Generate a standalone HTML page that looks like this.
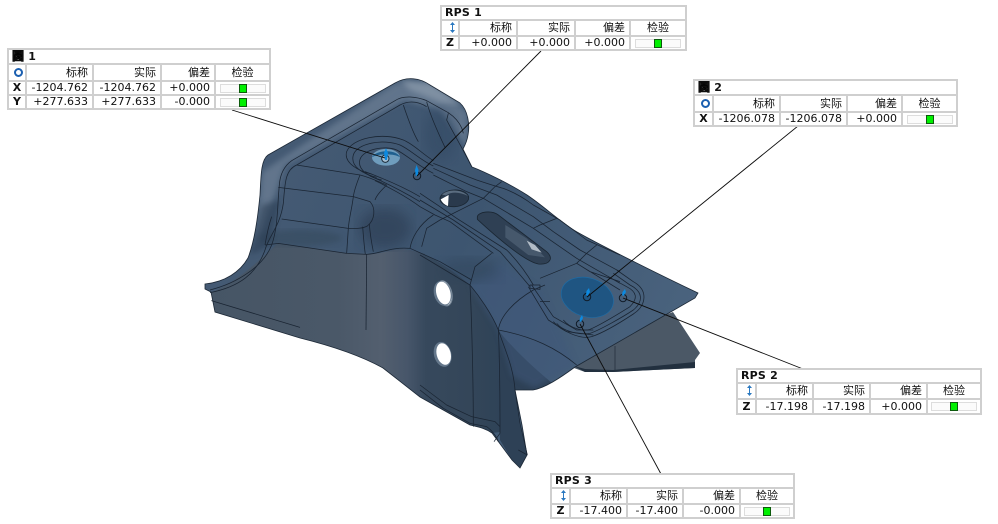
<!DOCTYPE html>
<html lang="zh">
<head>
<meta charset="utf-8">
<title>RPS</title>
<style>
html,body{margin:0;padding:0;background:#fff;width:998px;height:524px;overflow:hidden}
svg.p{position:absolute;left:0;top:0}
table{position:absolute;border-collapse:collapse;table-layout:fixed;background:#fff;font:11px "DejaVu Sans","Noto Sans CJK SC",sans-serif;color:#111}
td{border:2px solid #cfcfcf;padding:0 4px 0 0;text-align:right;white-space:nowrap;overflow:hidden;line-height:12px}
td.t{text-align:left;font-weight:bold;padding-left:3px;letter-spacing:.2px}
td.t b{font-family:"WenQuanYi Zen Hei","Noto Sans CJK SC",sans-serif;-webkit-text-stroke:.6px #000;font-size:12px;margin-right:4px}
td.h{font-family:"WenQuanYi Zen Hei","Noto Sans CJK SC",sans-serif;letter-spacing:0;padding-right:4px;padding-bottom:2px}
td.c{text-align:right;padding:0 2px 0 0}
td.hc{text-align:center;padding:0 0 2px 0}
td.a{text-align:center;font-weight:bold;padding:0}
td.g{padding:0;text-align:center}
.ga{display:block;position:relative;width:44px;height:7px;margin:0 auto;border:1px solid #ddd;background:#fbfbfb}
.ga i{position:absolute;left:18px;top:-1px;width:6px;height:7px;background:#00f000;border:1px solid #0c5a0c}
.o{display:inline-block;width:5px;height:5px;border:2px solid #1b5fb0;border-radius:50%;vertical-align:-1px}
.ar{display:inline-block;vertical-align:-1px;margin-right:1px}
</style>
</head>
<body>
<svg class="p" width="998" height="524" viewBox="0 0 998 524">
<defs>
<linearGradient id="flange" x1="205" y1="0" x2="425" y2="0" gradientUnits="userSpaceOnUse">
<stop offset="0" stop-color="#465565"/><stop offset=".6" stop-color="#4a5868"/><stop offset=".8" stop-color="#535f6f"/><stop offset=".92" stop-color="#47566a"/><stop offset="1" stop-color="#37495d"/>
</linearGradient>
<linearGradient id="top" x1="260" y1="100" x2="700" y2="300" gradientUnits="userSpaceOnUse">
<stop offset="0" stop-color="#465b74"/><stop offset=".5" stop-color="#3d5570"/><stop offset="1" stop-color="#4a637e"/>
</linearGradient>
<linearGradient id="side" x1="420" y1="0" x2="500" y2="0" gradientUnits="userSpaceOnUse">
<stop offset="0" stop-color="#37495d"/><stop offset=".6" stop-color="#344659"/><stop offset="1" stop-color="#2f4358"/>
</linearGradient>
<clipPath id="sil"><path id="s" d="M205,284 C225,282 240,272 248,258 C255,240 258,215 260,195 C261,175 261,160 268,155 L395,83 C407,76 420,78 430,85 L460,103 C468,110 470,125 468,135 C467,142 464,147 463,149 L472,167 C485,172 510,184 527,195 C545,207 560,222 577,232 C600,245 660,275 698,293 L695,298 L575,367 C560,378 545,388 533,390 L515,390 L522,425 L527,455 L520,468 L512,460 L492,433 C485,428 478,427 470,425 L420,397 L383,368 C365,358 340,348 300,338 L215,312 L211,292 L205,289 Z"/></clipPath>
<filter id="b6"><feGaussianBlur stdDeviation="6"/></filter>
<filter id="b3"><feGaussianBlur stdDeviation="3"/></filter>
</defs>

<!-- rear flange under the part -->
<path d="M673,312 L700,353 L695,360 L695,368 L613,372 L585,372 L574,368 L600,340 Z" fill="#4b5866"/>
<path d="M574,366 L585,369 L613,370 L695,362 L695,368 L613,372 L585,372 Z" fill="#22303f"/>
<path d="M615,346 L615,371" stroke="#26323f" stroke-width=".8" fill="none"/>

<use href="#s" fill="url(#top)"/>
<g clip-path="url(#sil)">
  <!-- rim highlight -->
  <path d="M262,172 L395,83 L430,82 L468,112 L468,150 L440,110 L405,100 L285,165 L270,210 L255,250Z" fill="#72849a" filter="url(#b3)" opacity=".65"/>
  <path d="M400,80 L432,84 L462,105 L440,102 L410,90Z" fill="#7f90a3" filter="url(#b3)"/>
  <!-- side panel -->
  <path d="M418,252 C430,256 450,268 470,285 C485,305 495,320 498,330 L500,432 L492,433 C485,428 478,427 470,425 L420,397 L412,388Z" fill="url(#side)"/>
  <!-- flange panel -->
  <path d="M205,294 C230,288 258,262 278,243 L347,253 L373,254 C385,253 397,247 410,250 L425,254 L425,400 L383,368 C365,358 340,348 300,338 L215,312Z" fill="url(#flange)"/>
  <path d="M498,330 C510,345 530,365 552,383 L533,392 L515,392 L520,425 L527,455 L520,468 L512,460 L500,440Z" fill="#2e4156"/>
  <path d="M470,285 L500,262 L540,290 L575,365 L535,388 L512,376 L498,330Z" fill="#41597a" filter="url(#b3)" opacity=".55"/>
  <!-- shadow blob -->
  <ellipse cx="385" cy="228" rx="26" ry="20" fill="#2d4157" filter="url(#b6)" opacity=".7"/>
  <ellipse cx="300" cy="238" rx="42" ry="8" fill="#34485c" filter="url(#b3)" opacity=".55"/>
  <ellipse cx="440" cy="135" rx="16" ry="26" fill="#2f455e" filter="url(#b6)" opacity=".4"/>
  <path d="M250,255 L262,205 L280,200 L270,245Z" fill="#2c3e52" filter="url(#b3)" opacity=".6"/>
  <ellipse cx="470" cy="270" rx="30" ry="12" fill="#2f4358" filter="url(#b6)" opacity=".45"/>
</g>
<use href="#s" fill="none" stroke="#1c2836" stroke-width=".8"/>

<!-- wireframe, from zoom coordinates -->
<g transform="translate(200 70) scale(.33333)" fill="none" stroke="#1a2533" stroke-width="2.3" stroke-linejoin="round">
  <path d="M30,660 C110,640 190,590 215,525 C235,470 232,400 238,345 C240,315 250,290 275,272 L585,92 C610,75 650,80 680,92 L745,128 C770,145 785,165 790,190"/>
  <path d="M30,668 C120,650 170,610 195,540 C205,500 240,470 250,400 C255,340 255,300 290,285 L600,105 C625,92 650,92 680,110"/>
  <path d="M680,95 C690,135 715,190 735,232 M610,105 C625,150 640,190 655,215 M745,130 L740,150 C755,180 790,240 815,290"/>
  <path d="M290,285 L480,315 C510,322 535,335 560,345"/>
  <path d="M235,352 L460,380 L510,395 C528,415 525,450 502,468 C490,475 465,477 445,475 L245,447"/>
  <path d="M480,315 C470,340 462,365 460,380 C455,420 447,445 445,475 L440,550"/>
  <path d="M195,525 L235,520 L440,550 L500,553 C540,552 570,530 630,535 L720,575 L815,630"/>
  <path d="M500,553 L498,780"/>
  <path d="M488,470 C490,495 492,525 496,553 M508,462 C510,490 515,520 520,545"/>
  <path d="M560,345 C545,360 530,375 525,390"/>
  <path d="M215,440 C205,470 200,495 195,525"/>
  <path d="M34,692 L300,772"/>
  <!-- bead around hole -->
  <path d="M515,312 C480,305 430,280 440,245 C455,205 545,185 610,210 C640,222 665,250 700,272"/>
  <path d="M530,322 C490,312 450,290 460,255 C470,220 550,205 600,225 C630,238 660,270 700,288"/>
  <path d="M545,330 C510,322 470,300 480,268 C490,238 555,225 590,240 C620,255 650,285 700,310"/>
  <path d="M495,305 C530,318 600,345 660,380"/>
  <path d="M510,318 C550,335 610,365 660,395"/>
  <path d="M525,332 C560,348 620,380 660,410"/>
  <path d="M720,450 L680,475 L665,530 M630,535 C635,505 655,465 700,435"/>
</g>
<g transform="translate(420 150) scale(.33333)" fill="none" stroke="#1a2533" stroke-width="2.3" stroke-linejoin="round">
  <path d="M40,40 L170,90 C200,100 230,110 250,115 C290,130 320,150 340,165 L420,210 L500,270 L600,315"/>
  <path d="M40,55 L150,105 L230,135 L340,200 L400,245 L480,300 L600,365"/>
  <path d="M40,75 L140,125 L190,145 L340,235 L470,325 L600,400"/>
  <path d="M0,130 L60,170 L110,205 L260,300 C290,330 320,370 340,405"/>
  <path d="M0,150 L50,180 L100,210 L240,305 C270,340 310,385 330,410"/>
  <path d="M0,170 L45,195 L90,215 L220,310"/>
  <path d="M60,210 L190,145 L225,110 L245,95 M470,340 L500,310 L530,285 M340,235 L360,225 L410,205 M360,385 L470,340 M215,310 L165,350 L150,405 M0,315 L150,405"/>
  <path d="M470,340 L510,365 L600,395 M470,340 L600,420"/>
</g>
<g transform="translate(420 170) scale(.33333)" fill="none" stroke="#1a2533" stroke-width="2.3" stroke-linejoin="round">
  <path d="M335,345 L400,440 L470,480 L520,480 M325,350 L385,450 L440,485 L520,495"/>
  <path d="M235,480 C240,440 280,395 340,360 L375,345 M330,345 L360,345 L360,358 L330,355Z M360,395 L390,395"/>
  <path d="M150,345 C175,375 215,430 235,480"/>
  <path d="M150,345 C155,440 160,640 160,770 M235,480 C240,590 240,700 240,790"/>
  <path d="M235,480 C255,540 280,590 285,660"/>
  <path d="M235,480 C340,500 410,535 470,585"/>
  <path d="M0,645 L80,705 L155,740 L225,755 L240,770 M0,660 L70,715 L150,760 L200,770 C215,780 230,800 235,815 M240,790 L222,815"/>
  <path d="M285,660 L300,760 L322,855 M295,840 L322,855"/>
  <!-- pocket -->
  <path d="M400,455 C420,480 480,510 515,500 C545,490 590,465 640,432 C680,405 685,360 640,335 L590,300"/>
  <path d="M410,460 C430,485 480,495 510,490 C540,480 610,440 640,420 C670,395 670,365 630,345 L580,310"/>
  <path d="M430,450 C450,475 490,485 510,478 C540,465 590,435 630,410 C655,385 650,365 620,350 L565,320"/>
</g>

<!-- holes -->
<g transform="translate(200 70) scale(.33333)">
  <ellipse cx="558" cy="262" rx="42" ry="25" fill="#6f9dbd"/>
  <path d="M516,262 C525,240 590,235 600,262 C585,250 535,250 516,262Z" fill="#1f608f"/>
  <circle cx="556" cy="266" r="11" fill="#a4bfd2" stroke="#1a2a38" stroke-width="3"/>
  <ellipse cx="733" cy="670" rx="24" ry="40" transform="rotate(-15 733 670)" fill="#7a8a9a"/>
  <ellipse cx="733" cy="669" rx="20" ry="37" transform="rotate(-15 733 669)" fill="#fff"/>
</g>
<g transform="translate(420 150) scale(.33333)">
  <ellipse cx="103" cy="145" rx="43" ry="25" transform="rotate(-3 103 145)" fill="#2a3a4d" stroke="#1a2632" stroke-width="2.5"/>
  <path d="M62,148 L86,135 L84,168 C72,164 66,156 62,148Z" fill="#fff"/>
  <path d="M66,134 C85,116 125,118 144,138 C120,126 95,124 78,136Z" fill="#5b6d80"/>
  <path d="M172,200 C175,185 215,180 235,195 L380,305 C402,325 390,345 355,342 C320,335 250,280 172,208 Z" fill="#2f4054" stroke="#1a2632" stroke-width="2.5"/>
  <path d="M256,225 L256,262 L325,315 L375,322 L320,265Z" fill="#46586c"/>
  <path d="M320,272 L345,285 L365,308 L335,298Z" fill="#b2bcc6"/>
</g>
<g transform="translate(420 170) scale(.33333)">
  <ellipse cx="68" cy="370" rx="26" ry="38" transform="rotate(-15 68 370)" fill="#64778b"/>
  <ellipse cx="70" cy="369" rx="21" ry="35" transform="rotate(-15 70 369)" fill="#fff"/>
  <ellipse cx="68" cy="553" rx="26" ry="38" transform="rotate(-15 68 553)" fill="#64778b"/>
  <ellipse cx="71" cy="552" rx="21" ry="33" transform="rotate(-15 71 552)" fill="#fff"/>
  <ellipse cx="502" cy="382" rx="80" ry="58" transform="rotate(18 502 382)" fill="#1f5582" stroke="#1d6ba5" stroke-width="2"/>
</g>

<!-- markers -->
<g fill="none" stroke="#101a26" stroke-width="1">
  <circle cx="417" cy="176" r="3.7"/>
  <circle cx="587" cy="297" r="3.7"/>
  <circle cx="623" cy="298" r="3.7"/>
  <circle cx="580" cy="324" r="3.7"/>
</g>
<g fill="#0d8ae0">
  <path d="M386,148 L388,153 L387,160 L385,160 L384,153Z"/>
  <path d="M416.500,165 L418.500,170 L417.800,176 L415.800,176 L415,170Z"/>
  <path d="M589,288 L590,292 L587.500,296 L586,295 L586.500,291Z"/>
  <path d="M625,289 L626,292 L623.500,296 L622,295 L622.500,292Z"/>
  <path d="M582,315 L583,318 L581,322 L579.500,321 L580,318Z"/>
</g>

<!-- leader lines -->
<g stroke="#0c0c0c" stroke-width=".9" fill="none">
  <path d="M232,110 L385,158"/>
  <path d="M541,51 L417,176"/>
  <path d="M798,126 L587,297"/>
  <path d="M803,369 L623,298"/>
  <path d="M661,474 L580,324"/>
</g>
</svg>

<table style="left:7px;top:48px;width:262px">
<colgroup><col style="width:18px"><col style="width:67px"><col style="width:68px"><col style="width:54px"><col style="width:55px"></colgroup>
<tr style="height:15px"><td class="t" colspan="5"><b>圆</b>1</td></tr>
<tr style="height:17px"><td class="c"><span class="o"></span></td><td class="h">标称</td><td class="h">实际</td><td class="h">偏差</td><td class="h hc">检验</td></tr>
<tr style="height:14px"><td class="a">X</td><td>-1204.762</td><td>-1204.762</td><td>+0.000</td><td class="g"><span class="ga"><i></i></span></td></tr>
<tr style="height:14px"><td class="a">Y</td><td>+277.633</td><td>+277.633</td><td>-0.000</td><td class="g"><span class="ga"><i></i></span></td></tr>
</table>

<table style="left:440px;top:5px;width:245px">
<colgroup><col style="width:18px"><col style="width:58px"><col style="width:58px"><col style="width:55px"><col style="width:56px"></colgroup>
<tr style="height:14px"><td class="t" colspan="5">RPS 1</td></tr>
<tr style="height:16px"><td class="c"><svg class="ar" width="5" height="11" viewBox="0 0 5 11"><path d="M2.500,0 L5,3 L3,3 L3,8 L5,8 L2.500,11 L0,8 L2,8 L2,3 L0,3Z" fill="#2a78c0"/></svg></td><td class="h">标称</td><td class="h">实际</td><td class="h">偏差</td><td class="h hc">检验</td></tr>
<tr style="height:14px"><td class="a">Z</td><td>+0.000</td><td>+0.000</td><td>+0.000</td><td class="g"><span class="ga"><i></i></span></td></tr>
</table>

<table style="left:693px;top:79px;width:263px">
<colgroup><col style="width:19px"><col style="width:67px"><col style="width:67px"><col style="width:55px"><col style="width:55px"></colgroup>
<tr style="height:15px"><td class="t" colspan="5"><b>圆</b>2</td></tr>
<tr style="height:17px"><td class="c"><span class="o"></span></td><td class="h">标称</td><td class="h">实际</td><td class="h">偏差</td><td class="h hc">检验</td></tr>
<tr style="height:14px"><td class="a">X</td><td>-1206.078</td><td>-1206.078</td><td>+0.000</td><td class="g"><span class="ga"><i></i></span></td></tr>
</table>

<table style="left:736px;top:368px;width:244px">
<colgroup><col style="width:19px"><col style="width:57px"><col style="width:57px"><col style="width:57px"><col style="width:54px"></colgroup>
<tr style="height:14px"><td class="t" colspan="5">RPS 2</td></tr>
<tr style="height:16px"><td class="c"><svg class="ar" width="5" height="11" viewBox="0 0 5 11"><path d="M2.500,0 L5,3 L3,3 L3,8 L5,8 L2.500,11 L0,8 L2,8 L2,3 L0,3Z" fill="#2a78c0"/></svg></td><td class="h">标称</td><td class="h">实际</td><td class="h">偏差</td><td class="h hc">检验</td></tr>
<tr style="height:15px"><td class="a">Z</td><td>-17.198</td><td>-17.198</td><td>+0.000</td><td class="g"><span class="ga"><i></i></span></td></tr>
</table>

<table style="left:550px;top:473px;width:243px">
<colgroup><col style="width:19px"><col style="width:57px"><col style="width:56px"><col style="width:57px"><col style="width:54px"></colgroup>
<tr style="height:14px"><td class="t" colspan="5">RPS 3</td></tr>
<tr style="height:16px"><td class="c"><svg class="ar" width="5" height="11" viewBox="0 0 5 11"><path d="M2.500,0 L5,3 L3,3 L3,8 L5,8 L2.500,11 L0,8 L2,8 L2,3 L0,3Z" fill="#2a78c0"/></svg></td><td class="h">标称</td><td class="h">实际</td><td class="h">偏差</td><td class="h hc">检验</td></tr>
<tr style="height:14px"><td class="a">Z</td><td>-17.400</td><td>-17.400</td><td>-0.000</td><td class="g"><span class="ga"><i></i></span></td></tr>
</table>
</body>
</html>
